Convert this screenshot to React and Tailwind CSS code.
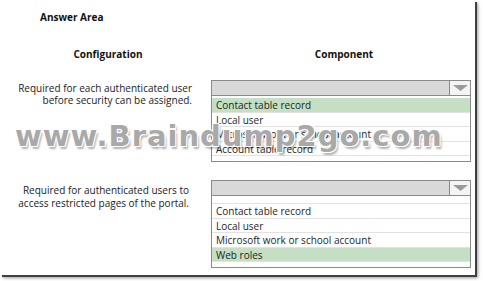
import React from 'react';

const rowsA = [
  { text: 'Contact table record', active: true },
  { text: 'Local user' },
  { text: 'Microsoft work or school account' },
  { text: 'Account table record' },
];

const rowsB = [
  { text: 'Contact table record' },
  { text: 'Local user' },
  { text: 'Microsoft work or school account' },
  { text: 'Web roles', active: true },
];

const Dropdown = ({ rows, topGap }) => (
  <div className="w-[260px] border border-[#8a8a8a] bg-white">
    {/* Select header */}
    <div className="flex h-[15px] border-b border-[#8a8a8a]">
      <div className="flex-1 bg-[#d9d9d9]"></div>
      <div className="w-[21px] border-l border-[#8a8a8a] bg-[#f4f4f4] flex items-center justify-center">
        <svg width="15" height="6" viewBox="0 0 15 6">
          <path d="M0 0h15L7.5 6z" fill="#9a9a9a" />
        </svg>
      </div>
    </div>
    {topGap}
    {rows.map((row) => (
      <div
        key={row.text}
        className={`h-[14.5px] border-b border-[#e2e2e2] pl-[4px] text-[10px] leading-[14px] text-[#1e1e1e] ${
          row.active ? 'bg-[#c5dfc4]' : ''
        }`}
      >
        {row.text}
      </div>
    ))}
    <div className="h-[5px]"></div>
  </div>
);

export default function App() {
  return (
    <div className="w-[483px] h-[281px] bg-white" style={{ fontFamily: '"Open Sans", "Noto Sans", sans-serif' }}>
      <div className="relative w-[475px] h-[275px] bg-white shadow-[2px_2px_0_#3f3f3f,3px_3px_3px_#9a9a9a] pt-[10px]">
        <div className="pl-[40px] h-[14px] text-[10px] leading-[14px] font-bold text-[#111]">Answer Area</div>

        {/* Column titles */}
        <div className="flex mt-[23px] h-[14px] text-[10px] leading-[14px] font-bold text-[#111]">
          <div className="w-[216px] text-center">Configuration</div>
          <div className="w-[256px] text-center">Component</div>
        </div>

        {/* Question 1 */}
        <div className="flex mt-[19px] gap-[19px]">
          <div className="w-[192px] pt-[2px] text-right text-[10px] leading-[12px] text-[#222]">
            <div>Required for each authenticated user</div>
            <div>before security can be assigned.</div>
          </div>
          <Dropdown rows={rowsA} topGap={<div className="h-[2px]"></div>} />
        </div>

        {/* Question 2 */}
        <div className="flex mt-[18px] gap-[19px]">
          <div className="w-[189px] pt-[4px] text-right text-[10px] leading-[13px] text-[#222]">
            <div>Required for authenticated users to</div>
            <div>access restricted pages of the portal.</div>
          </div>
          <div className="ml-[3px]">
            <Dropdown rows={rowsB} topGap={<div className="h-[8px] border-b border-[#e2e2e2]"></div>} />
          </div>
        </div>

        {/* Watermark */}
        <div
          className="absolute left-[15px] top-[122px] text-[29px] leading-[29px] font-bold tracking-[1px] text-[#a9a9a9] whitespace-nowrap pointer-events-none [text-shadow:1px_1px_0_#fff,-1px_-1px_0_#fff,1px_-1px_0_#fff,-1px_1px_0_#fff,2px_3px_2px_rgba(0,0,0,0.3)]"
          style={{ fontFamily: '"DejaVu Sans", sans-serif' }}
        >
          www.Braindump2go.com
        </div>
      </div>
    </div>
  );
}
